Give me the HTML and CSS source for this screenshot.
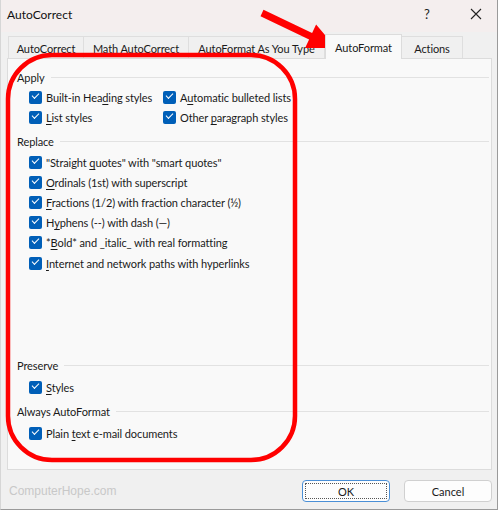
FILE: index.html
```html
<!DOCTYPE html>
<html>
<head>
<meta charset="utf-8">
<link rel="stylesheet" href="styles.css">
</head>
<body>
<div class="window">
  <div class="titlebar">
    <span class="title">AutoCorrect</span>
    <span class="help">?</span>
    <span class="close"><svg width="12" height="12" viewBox="0 0 12 12"><path d="M1 1L11 11M11 1L1 11" stroke="#222" stroke-width="1.1"/></svg></span>
  </div>
  <div class="body">
    <div class="tabs">
      <div class="tab t1">AutoCorrect</div>
      <div class="tab t2">Math AutoCorrect</div>
      <div class="tab t3">AutoFormat As You Type</div>
      <div class="tab active t4">AutoFormat</div>
      <div class="tab t5">Actions</div>
    </div>
    <div class="panel">
      <div class="group g-apply"><span>Apply</span></div>
      <div class="grid2">
        <label class="cb"><i class="box"></i><span>Built-in Hea<u>d</u>ing styles</span></label>
        <label class="cb"><i class="box"></i><span>A<u>u</u>tomatic bulleted lists</span></label>
        <label class="cb"><i class="box"></i><span><u>L</u>ist styles</span></label>
        <label class="cb"><i class="box"></i><span>Other <u>p</u>aragraph styles</span></label>
      </div>
      <div class="group g-replace"><span>Replace</span></div>
      <div class="list">
        <label class="cb"><i class="box"></i><span>"Straight <u>q</u>uotes" with "smart quotes"</span></label>
        <label class="cb"><i class="box"></i><span><u>O</u>rdinals (1st) with superscript</span></label>
        <label class="cb"><i class="box"></i><span><u>F</u>ractions (1/2) with fraction character (½)</span></label>
        <label class="cb"><i class="box"></i><span>H<u>y</u>phens (--) with dash (—)</span></label>
        <label class="cb"><i class="box"></i><span>*<u>B</u>old* and _italic_ with real formatting</span></label>
        <label class="cb"><i class="box"></i><span><u>I</u>nternet and network paths with hyperlinks</span></label>
      </div>
      <div class="group g-preserve"><span>Preserve</span></div>
      <div class="list l-gap">
        <label class="cb"><i class="box"></i><span><u>S</u>tyles</span></label>
      </div>
      <div class="group g-always"><span>Always AutoFormat</span></div>
      <div class="list l-gap">
        <label class="cb"><i class="box"></i><span>Plain <u>t</u>ext e-mail documents</span></label>
      </div>
    </div>
    <div class="footer">
      <span class="watermark">ComputerHope.com</span>
      <div class="buttons">
        <button class="btn ok"><span>OK</span></button>
        <button class="btn">Cancel</button>
      </div>
    </div>
  </div>
  <svg class="annot" width="500" height="511" viewBox="0 0 500 511">
    <rect x="8" y="55" width="287" height="405" rx="44" ry="44" fill="none" stroke="#f00" stroke-width="4.5"/>
    <polygon fill="#f00" points="263.5,9.8 312.1,33 316.1,24.4 336,48 305.1,48 309.1,39.4 260.5,16.2"/>
  </svg>
</div>
</body>
</html>
```

FILE: styles.css
```css
* { box-sizing: border-box; }
html, body { margin: 0; padding: 0; }
body {
  width: 500px;
  height: 511px;
  font-family: "Lato", "Noto Sans", sans-serif;
  font-size: 11px;
  letter-spacing: -0.1px;
  color: #1a1a1a;
  background: #fff;
  overflow: hidden;
}
.window {
  position: relative;
  width: 498px;
  height: 510px;
  border-left: 1px solid #d6d6d6;
  border-right: 1px solid #9a9a9a;
  border-bottom: 1px solid #9a9a9a;
  background: #f0f0f0;
  display: flex;
  flex-direction: column;
}
.titlebar {
  height: 32px;
  background: #f4eeee;
  display: flex;
  align-items: center;
  padding-left: 6px;
  padding-bottom: 4px;
}
.title { font-size: 12px; color: #111; flex: 1; letter-spacing: 0; }
.help { width: 14px; margin-right: 32px; font-size: 13px; color: #222; }
.close { width: 12px; margin-right: 15px; display: flex; }
.body {
  flex: 1;
  display: flex;
  flex-direction: column;
  padding: 0 5px 0 6px;
  background: #f0f0f0;
}
.tabs {
  height: 26px;
  display: flex;
  align-items: flex-end;
  padding-left: 1px;
  padding-top: 3px;
}
.tab {
  height: 22px;
  border: 1px solid #dedede;
  border-bottom: none;
  background: #f0f0f0;
  display: flex;
  align-items: center;
  justify-content: center;
  color: #1a1a1a;
  margin-right: -1px;
  white-space: nowrap;
  padding-top: 1px;
}
.t1 { width: 76px; }
.t2 { width: 106px; }
.t3 { width: 137px; }
.t4 { width: 77px; }
.t5 { width: 62px; }
.tab.active {
  height: 25px;
  background: #f9f9f9;
  border-color: #dcdcdc;
  margin-left: 1px;
  margin-bottom: -1px;
  position: relative;
  z-index: 1;
}
.panel {
  height: 412px;
  width: 485px;
  background: #f9f9f9;
  border: 1px solid #dcdcdc;
  padding: 8px 2px 0 9px;
  display: flex;
  flex-direction: column;
}
.group {
  height: 20px;
  display: flex;
  align-items: center;
  color: #1a1a1a;
}
.group::after {
  content: "";
  flex: 1;
  height: 1px;
  background: #e2e2e2;
  margin-left: 6px;
}
.g-replace { margin-top: 4px; }
.g-preserve { margin-top: 82px; }
.g-always { margin-top: 4px; }
.grid2 {
  display: grid;
  grid-template-columns: 134px auto;
  padding-left: 12px;
}
.list {
  display: flex;
  flex-direction: column;
  padding-left: 12px;
  margin-top: 1px;
}
.list.l-gap { margin-top: 2px; }
.cb {
  height: 20px;
  display: flex;
  align-items: center;
  white-space: nowrap;
  color: #1a1a1a;
}
.list .cb { height: 20.2px; }
.cb u { text-decoration-thickness: 1px; text-underline-offset: 2px; }
.box {
  width: 13px;
  height: 13px;
  border-radius: 2px;
  background: #005fb8;
  margin-right: 4px;
  flex: none;
  position: relative;
}
.box::after {
  content: "";
  position: absolute;
  left: 3px;
  top: 2px;
  width: 6px;
  height: 3px;
  border-left: 1.3px solid #fff;
  border-bottom: 1.3px solid #fff;
  transform: rotate(-45deg);
}
.footer {
  flex: 1;
  display: flex;
  align-items: flex-start;
  padding-top: 10px;
}
.watermark {
  flex: 1;
  color: #c8c8c8;
  font-family: "Liberation Sans", Arial, sans-serif;
  font-size: 12px;
  letter-spacing: 0;
  padding-top: 4px;
  padding-left: 2px;
}
.buttons {
  display: flex;
  gap: 14px;
}
.btn {
  width: 88px;
  height: 22px;
  border: 1px solid #d0d0d0;
  border-radius: 4px;
  background: #fdfdfd;
  font-family: inherit;
  font-size: 11px;
  color: #1a1a1a;
  padding: 0;
  display: flex;
  align-items: center;
  justify-content: center;
}
.btn.ok {
  border: 1px solid #4a8fd6;
  padding: 2px;
}
.btn.ok span {
  flex: 1;
  align-self: stretch;
  border: 1px dotted #555;
  display: flex;
  align-items: center;
  justify-content: center;
}
.annot {
  position: absolute;
  left: -1px;
  top: 0;
  pointer-events: none;
}
```
